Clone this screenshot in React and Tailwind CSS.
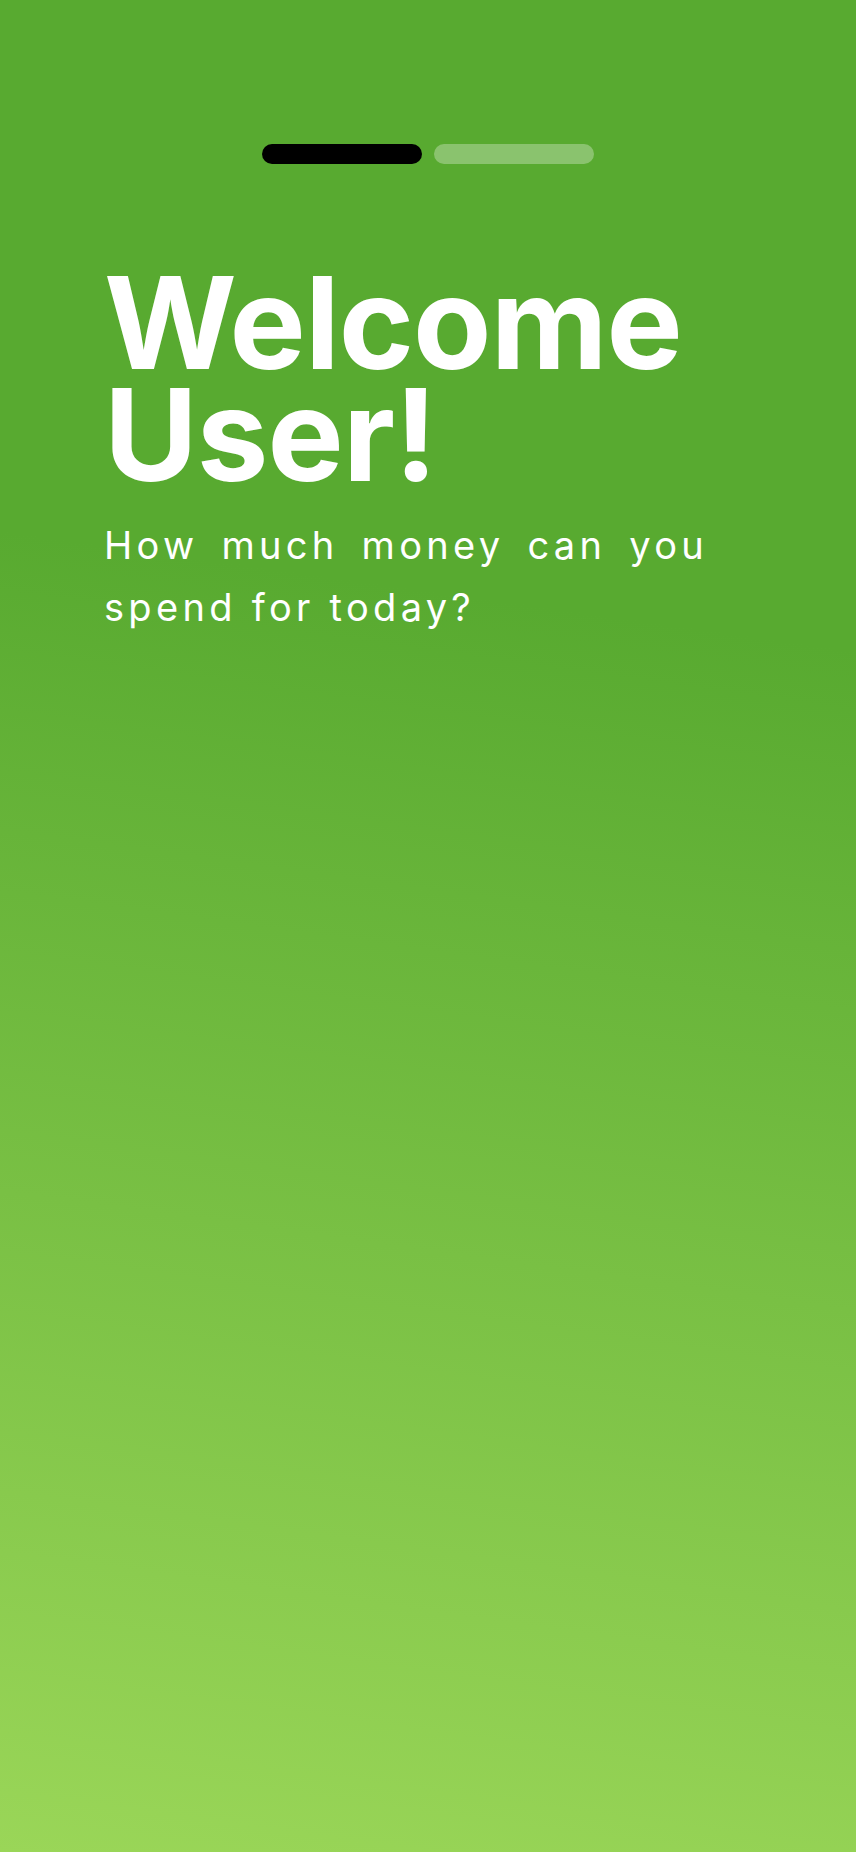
export default function App() {
  return (
    <div
      className="min-h-[1852px] w-full bg-[linear-gradient(188deg,#58aa30_33%,#9ad658_100%)] font-['Inter',sans-serif] text-white"
    >
      <div className="flex justify-center gap-3 pt-[144px]">
        <div className="h-5 w-40 rounded-full bg-black" />
        <div className="h-5 w-40 rounded-full bg-white/30" />
      </div>
      <div className="px-[104px] pt-[103px]">
        <h1 className="text-[128px] font-bold leading-[112px] tracking-[-0.9px]">
          Welcome
          <br />
          User!
        </h1>
        <p className="mt-[23px] max-w-[604px] text-justify text-[38px] font-normal leading-[62px] tracking-[4.3px]">
          How much money can you spend for today?
        </p>
      </div>
    </div>
  );
}
